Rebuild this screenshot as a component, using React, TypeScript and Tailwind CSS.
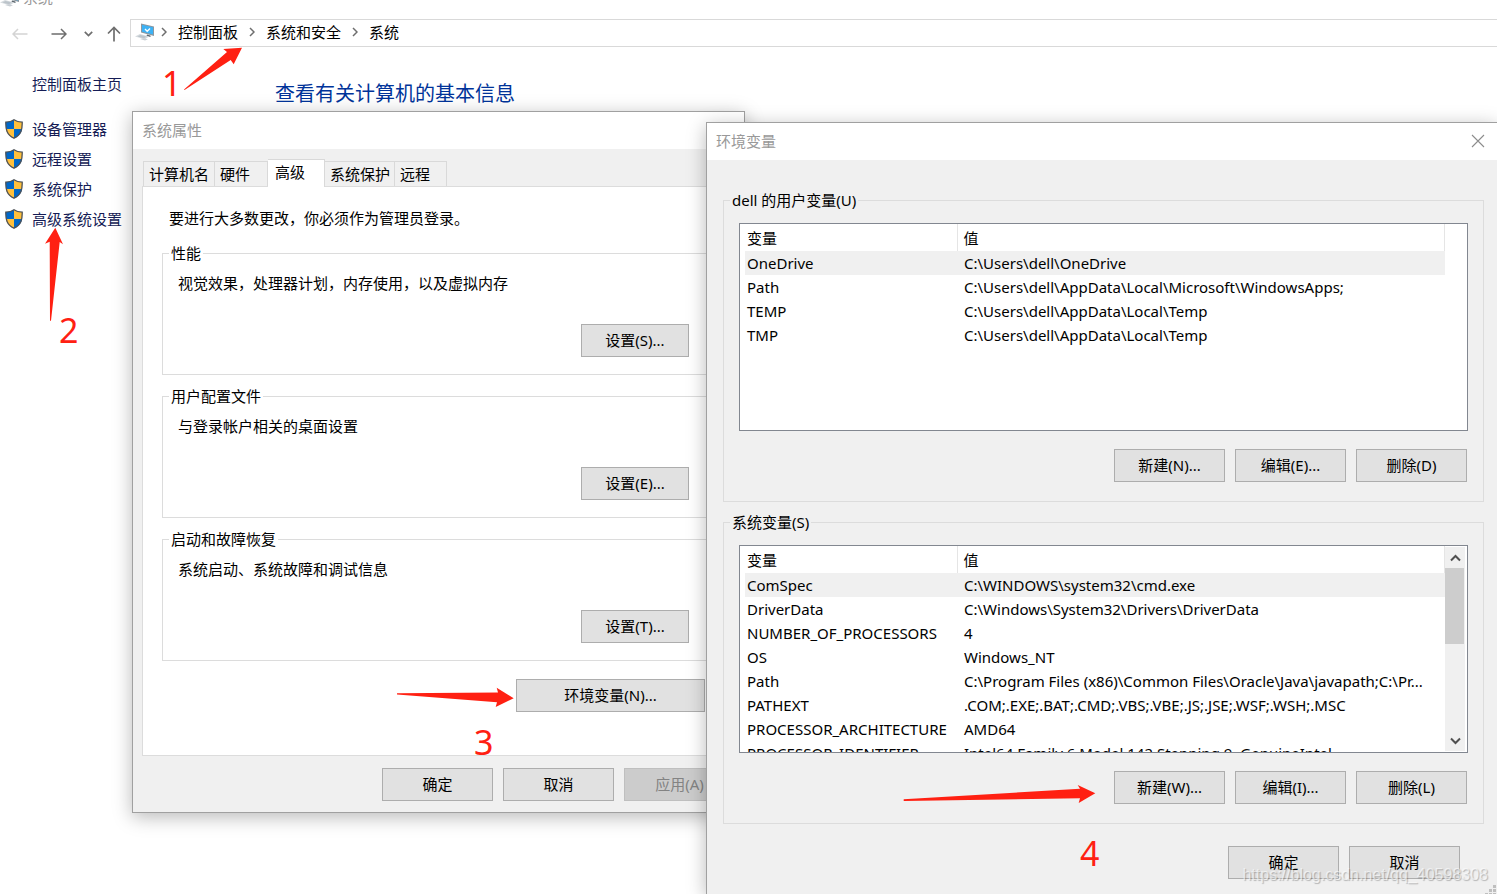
import { useState, type ReactNode } from "react";

type Variable = { name: string; value: string };

const userVariables: Variable[] = [
  { name: "OneDrive", value: "C:\\Users\\dell\\OneDrive" },
  { name: "Path", value: "C:\\Users\\dell\\AppData\\Local\\Microsoft\\WindowsApps;" },
  { name: "TEMP", value: "C:\\Users\\dell\\AppData\\Local\\Temp" },
  { name: "TMP", value: "C:\\Users\\dell\\AppData\\Local\\Temp" },
];

const systemVariables: Variable[] = [
  { name: "ComSpec", value: "C:\\WINDOWS\\system32\\cmd.exe" },
  { name: "DriverData", value: "C:\\Windows\\System32\\Drivers\\DriverData" },
  { name: "NUMBER_OF_PROCESSORS", value: "4" },
  { name: "OS", value: "Windows_NT" },
  { name: "Path", value: "C:\\Program Files (x86)\\Common Files\\Oracle\\Java\\javapath;C:\\Pr..." },
  { name: "PATHEXT", value: ".COM;.EXE;.BAT;.CMD;.VBS;.VBE;.JS;.JSE;.WSF;.WSH;.MSC" },
  { name: "PROCESSOR_ARCHITECTURE", value: "AMD64" },
  { name: "PROCESSOR_IDENTIFIER", value: "Intel64 Family 6 Model 142 Stepping 9, GenuineIntel" },
];

const tabs = [
  { label: "计算机名", width: "w-[72px]" },
  { label: "硬件", width: "w-[53px]" },
  { label: "高级", width: "w-[57px]" },
  { label: "系统保护", width: "w-[70px]" },
  { label: "远程", width: "w-[52px]" },
];

const sections = [
  { title: "性能", text: "视觉效果，处理器计划，内存使用，以及虚拟内存", button: "设置(S)..." },
  { title: "用户配置文件", text: "与登录帐户相关的桌面设置", button: "设置(E)..." },
  { title: "启动和故障恢复", text: "系统启动、系统故障和调试信息", button: "设置(T)..." },
];

const sidebarLinks = ["设备管理器", "远程设置", "系统保护", "高级系统设置"];

function ComputerIcon() {
  return (
    <svg width="20" height="18" viewBox="0 0 20 18" aria-hidden="true">
      <path d="M6 .5l13 3v9.500l-5.500-1.500L6 9.500z" fill="#8d979f" />
      <path d="M7 1.700l11 2.500v7.300L7 8.800z" fill="#3db2f5" />
      <path d="M10 6l2.200 2.300L15 5.500" fill="none" stroke="#fff" strokeWidth="1.300" />
      <path d="M12 11.500l3.500 1v1.500l-4-1z" fill="#5f6970" />
      <path d="M0 13.500l5-2.500 9 2.500-4 2.800z" fill="#d5dade" />
      <path d="M2.500 13.500l3-1.500 6 1.600L9 15.200z" fill="#bcc4ca" />
      <path d="M5 16l3-.8 5 1-3 1.300z" fill="#c9cfd4" />
    </svg>
  );
}

function ShieldIcon() {
  return (
    <svg width="18" height="20" viewBox="0 0 18 20" aria-hidden="true">
      <path d="M9 .7C6.800 2.300 3.500 3 .8 3c-.2 7 .8 12.500 8.200 16.200z" fill="#0067c8" />
      <path d="M9 .7c2.200 1.600 5.500 2.300 8.200 2.300.2 7-.8 12.500-8.200 16.200z" fill="#ffc03c" />
      <path d="M.9 10H9v9.200C3.700 16.600 1.500 13.800.9 10z" fill="#ffc03c" />
      <path d="M17.100 10H9v9.200c5.300-2.600 7.500-5.400 8.100-9.200z" fill="#0067c8" />
      <path
        d="M9 .8C6.800 2.400 3.500 3.100.8 3.100c-.2 7 .8 12.400 8.200 16.100 7.400-3.700 8.400-9.100 8.200-16.100C14.500 3.100 11.200 2.400 9 .8z"
        fill="none"
        stroke="#4d5257"
        strokeWidth="1.300"
      />
    </svg>
  );
}

function Chevron() {
  return (
    <svg width="6" height="10" viewBox="0 0 6 10" aria-hidden="true">
      <path d="M1 1l4 4-4 4" fill="none" stroke="#6e6e6e" strokeWidth="1.500" />
    </svg>
  );
}

function Button({ children, width = "w-[111px]", disabled }: { children: ReactNode; width?: string; disabled?: boolean }) {
  return (
    <button
      type="button"
      disabled={disabled}
      className={`${width} h-[33px] shrink-0 border border-[#adadad] bg-[#e1e1e1] pb-[2px] disabled:border-[#bfbfbf] disabled:bg-[#cccccc] disabled:text-[#838383]`}
    >
      {children}
    </button>
  );
}

function GroupBox({ title, className, children }: { title: string; className: string; children: ReactNode }) {
  return (
    <fieldset className={`min-w-0 border border-[#dcdcdc] pl-[15px] ${className}`}>
      <legend className="-ml-[9px] px-[2px]">{title}</legend>
      {children}
    </fieldset>
  );
}

function Scrollbar() {
  return (
    <div className="my-px flex w-5 shrink-0 flex-col bg-[#f0f0f0]">
      <button type="button" aria-label="向上滚动" className="flex h-[21px] items-center justify-center">
        <svg width="11" height="8" viewBox="0 0 11 8" aria-hidden="true">
          <path d="M1 6.500l4.500-4.500L10 6.500" fill="none" stroke="#505050" strokeWidth="2" />
        </svg>
      </button>
      <div className="mr-px h-[76px] bg-[#cdcdcd]" />
      <button type="button" aria-label="向下滚动" className="mt-auto flex h-[21px] items-center justify-center">
        <svg width="11" height="8" viewBox="0 0 11 8" aria-hidden="true">
          <path d="M1 1.500L5.500 6 10 1.500" fill="none" stroke="#505050" strokeWidth="2" />
        </svg>
      </button>
    </div>
  );
}

function VariableList({ rows, scroll }: { rows: Variable[]; scroll?: boolean }) {
  const [selected, setSelected] = useState(0);

  return (
    <div className="flex h-[208px] overflow-hidden border border-[#828790] bg-white pr-[2px] pl-[5px]">
      <div className="min-w-0 flex-1 overflow-hidden">
        <table className="w-full table-fixed border-collapse text-left whitespace-nowrap">
          <thead>
            <tr className="h-[27px]">
              <th className="w-[212px] border-r border-[#e5e5e5] p-0 pl-[2px] font-normal">变量</th>
              <th className="border-r border-[#e5e5e5] p-0 pl-[6px] font-normal">值</th>
            </tr>
          </thead>
          <tbody>
            {rows.map((row, i) => (
              <tr key={row.name} onClick={() => setSelected(i)} className={i === selected ? "h-6 bg-[#f0f0f0]" : "h-6"}>
                <td className="p-0 pl-[2px]">{row.name}</td>
                <td className="p-0 pl-[7px]">{row.value}</td>
              </tr>
            ))}
          </tbody>
        </table>
      </div>
      {scroll ? <Scrollbar /> : <div className="w-5 shrink-0" />}
    </div>
  );
}

function SystemPropertiesDialog() {
  const [active, setActive] = useState("高级");

  return (
    <section className="absolute top-[111px] left-[132px] w-[613px] border border-[#a0a0a0] bg-[#f0f0f0] shadow-[0_4px_18px_rgba(0,0,0,0.28)]">
      <h2 className="flex h-[37px] items-center bg-white px-[9px] pb-[2px] text-[#999999]">系统属性</h2>
      <div className="px-[9px] pt-[10px] pb-[11px]">
        <div role="tablist" className="flex h-[27px] items-end px-px">
          {tabs.map((tab) => (
            <button
              key={tab.label}
              type="button"
              role="tab"
              aria-selected={active === tab.label}
              onClick={() => setActive(tab.label)}
              className={`${tab.width} shrink-0 border-t border-r border-[#d9d9d9] text-left first:border-l ${
                active === tab.label ? "relative -mb-px h-7 bg-white pb-1 pl-[7px]" : "h-[25px] bg-[#f0f0f0] pl-[5px]"
              }`}
            >
              {tab.label}
            </button>
          ))}
        </div>
        <div role="tabpanel" className="border border-[#dcdcdc] bg-white px-[19px] pt-[21px] pb-[43px]">
          <p className="px-[7px]">要进行大多数更改，你必须作为管理员登录。</p>
          <div className="mt-[15px] flex flex-col gap-[11px]">
            {sections.map((s) => (
              <GroupBox key={s.title} title={s.title} className="pt-[10px] pr-[25px] pb-[17px]">
                <p>{s.text}</p>
                <div className="mt-[31px] flex justify-end">
                  <Button width="w-[108px]">{s.button}</Button>
                </div>
              </GroupBox>
            ))}
          </div>
          <div className="mt-[18px] flex justify-end pr-[10px]">
            <Button width="w-[189px]">环境变量(N)...</Button>
          </div>
        </div>
        <div className="mt-3 flex justify-end gap-[10px]">
          <Button>确定</Button>
          <Button>取消</Button>
          <Button disabled>应用(A)</Button>
        </div>
      </div>
    </section>
  );
}

function EnvironmentDialog() {
  return (
    <section className="absolute top-[122px] right-0 bottom-0 left-[706px] overflow-hidden border-t border-l border-[#a0a0a0] bg-[#f0f0f0]">
      <header className="flex h-[37px] items-center justify-between bg-white pr-[12px] pb-[2px] pl-[9px]">
        <h2 className="text-[#999999]">环境变量</h2>
        <button type="button" aria-label="关闭">
          <svg width="14" height="14" viewBox="0 0 14 14" aria-hidden="true">
            <path d="M1 1l12 12M13 1L1 13" stroke="#8c8c8c" strokeWidth="1.100" />
          </svg>
        </button>
      </header>
      <div className="flex flex-col pt-[30px] pr-[13px] pl-4">
        <div className="flex flex-col gap-[10px]">
          <GroupBox title="dell 的用户变量(U)" className="pt-[13px] pr-[15px] pb-[19px]">
            <VariableList rows={userVariables} />
            <div className="mt-[18px] flex justify-end gap-[10px] pr-px">
              <Button>新建(N)...</Button>
              <Button>编辑(E)...</Button>
              <Button>删除(D)</Button>
            </div>
          </GroupBox>
          <GroupBox title="系统变量(S)" className="pt-[13px] pr-[15px] pb-[19px]">
            <VariableList rows={systemVariables} scroll />
            <div className="mt-[18px] flex justify-end gap-[10px] pr-px">
              <Button>新建(W)...</Button>
              <Button>编辑(I)...</Button>
              <Button>删除(L)</Button>
            </div>
          </GroupBox>
        </div>
        <div className="mt-[22px] flex justify-end gap-[10px] pr-6">
          <Button>确定</Button>
          <Button>取消</Button>
        </div>
      </div>
      <svg className="absolute right-0 bottom-0" width="12" height="9" viewBox="0 0 12 9" aria-hidden="true">
        <path d="M8 0h3v3H8zM4 4h3v3H4zM8 4h3v3H8zM0 8h3v1H0zM4 8h3v1H4zM8 8h3v1H8z" fill="#bfbfbf" />
      </svg>
    </section>
  );
}

// Numbered steps and arrows drawn over the windows
function Annotations() {
  return (
    <div className="pointer-events-none text-[34px] leading-10 text-[#ff2012]">
      <span className="absolute top-[63px] left-[162px]">1</span>
      <svg className="absolute top-[44px] left-[180px]" width="66" height="50" viewBox="180 44 66 50" aria-hidden="true">
        <path d="M242 47.700l-18.700 1.300 3.700 3L184 89.500l.5.500L230.700 60l3 4.300z" fill="#ff2012" />
      </svg>
      <span className="absolute top-[310px] left-[59px]">2</span>
      <svg className="absolute top-[224px] left-[40px]" width="28" height="100" viewBox="40 224 28 100" aria-hidden="true">
        <path d="M55.300 227.700L45 243.700l4.700-2L50 320.700h1L59.700 242l3.300 2.300z" fill="#ff2012" />
      </svg>
      <span className="absolute top-[722px] left-[474px]">3</span>
      <svg className="absolute top-[684px] left-[394px]" width="122" height="26" viewBox="394 684 122 26" aria-hidden="true">
        <path d="M513.700 698.300l-17-10.600 1.300 4.800-101 .7v1.300l100 7.800-1.300 4.700z" fill="#ff2012" />
      </svg>
      <span className="absolute top-[833px] left-[1080px]">4</span>
      <svg className="absolute top-[782px] left-[900px]" width="200" height="24" viewBox="900 782 200 24" aria-hidden="true">
        <path d="M1095.300 793.300L1077.700 785l2.300 3.700-176.300 10.600v1.700l176.300-2.700-1.300 4.700z" fill="#ff2012" />
      </svg>
    </div>
  );
}

export default function App() {
  return (
    <div className="relative min-h-screen overflow-hidden bg-white font-['Noto_Sans','Noto_Sans_CJK_SC',sans-serif] text-[15px] leading-5 text-black">
      <div className="flex h-[7px] items-end gap-[3px] overflow-hidden text-[#999999]">
        <ComputerIcon />
        <span>系统</span>
      </div>

      <nav className="mt-3 flex h-7 items-center">
        <div className="flex w-[130px] shrink-0 items-center pt-[2px] pl-3">
          <button type="button" aria-label="后退">
            <svg width="16" height="12" viewBox="0 0 16 12" aria-hidden="true">
              <path d="M15.500 6H1M6 1L1 6l5 5" fill="none" stroke="#d4d4d4" strokeWidth="1.500" />
            </svg>
          </button>
          <button type="button" aria-label="前进" className="ml-[23px]">
            <svg width="16" height="12" viewBox="0 0 16 12" aria-hidden="true">
              <path d="M.5 6H15M10 1l5 5-5 5" fill="none" stroke="#6e6e6e" strokeWidth="1.500" />
            </svg>
          </button>
          <button type="button" aria-label="最近位置" className="ml-[17px]">
            <svg width="9" height="6" viewBox="0 0 9 6" aria-hidden="true">
              <path d="M.8.8l3.700 3.700L8.200.8" fill="none" stroke="#6e6e6e" strokeWidth="1.700" />
            </svg>
          </button>
          <button type="button" aria-label="上移" className="ml-[14px]">
            <svg width="14" height="16" viewBox="0 0 14 16" aria-hidden="true">
              <path d="M7 15.500V1.500M1 7.500l6-6 6 6" fill="none" stroke="#6e6e6e" strokeWidth="1.700" />
            </svg>
          </button>
        </div>
        <div className="flex h-7 flex-1 items-center border border-r-0 border-[#d9d9d9] pb-[2px] pl-1">
          <ComputerIcon />
          <div className="ml-[6px] flex items-center gap-[11px]">
            <Chevron />
            <a href="#control-panel">控制面板</a>
            <Chevron />
            <a href="#security">系统和安全</a>
            <Chevron />
            <a href="#system">系统</a>
          </div>
        </div>
      </nav>

      <div className="flex">
        <aside className="w-[275px] shrink-0 pt-[27px] pl-[5px] text-[#151c55]">
          <a href="#home" className="ml-[27px]">
            控制面板主页
          </a>
          <ul className="mt-[25px] flex flex-col gap-[10px]">
            {sidebarLinks.map((label) => (
              <li key={label}>
                <a href="#settings" className="flex items-center gap-[9px]">
                  <ShieldIcon />
                  {label}
                </a>
              </li>
            ))}
          </ul>
        </aside>
        <main className="pt-[35px]">
          <h1 className="text-xl leading-6 text-[#003399]">查看有关计算机的基本信息</h1>
        </main>
      </div>

      <SystemPropertiesDialog />
      <div className="absolute top-[122px] right-0 bottom-0 left-[706px] shadow-[0_4px_18px_rgba(0,0,0,0.28)]" />
      <EnvironmentDialog />
      <Annotations />
      <p className="pointer-events-none absolute right-[9px] bottom-[7px] font-['Liberation_Sans',sans-serif] text-base text-white/60 [text-shadow:1px_1px_1px_rgba(0,0,0,0.25)]">
        https://blog.csdn.net/qq_40598308
      </p>
    </div>
  );
}
